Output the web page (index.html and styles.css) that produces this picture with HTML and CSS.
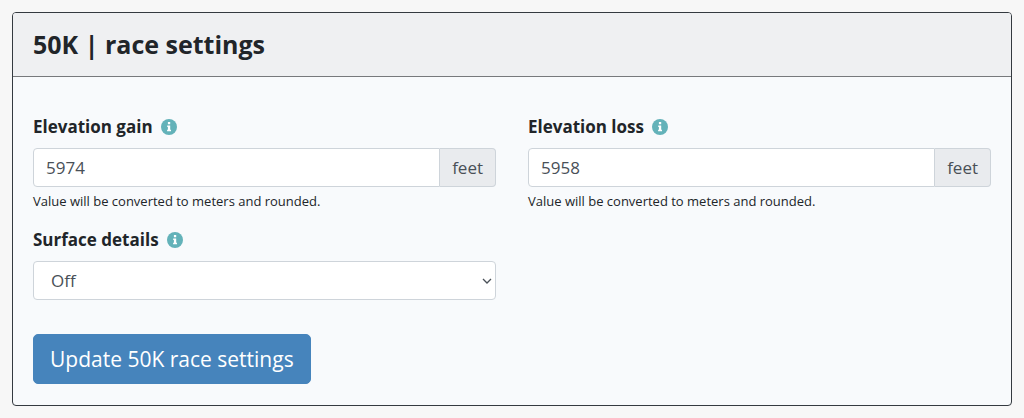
FILE: index.html
```html
<!DOCTYPE html>
<html lang="en">
<head>
    <meta charset="UTF-8">
    <meta name="viewport" content="width=device-width, initial-scale=1.0">
    <title>50K | race settings</title>
    <link rel="stylesheet" href="styles.css">
</head>
<body>
    <main class="card">
        <div class="card-header">
            <h1>50K | race settings</h1>
        </div>
        <form class="card-body">
            <div class="form-row">
                <div class="form-group">
                    <div class="label-row">
                        <label for="gain">Elevation gain</label>
                        <svg class="info-icon" viewBox="0 0 16 16" aria-hidden="true">
                            <circle cx="8" cy="8" r="8"/>
                            <path d="M6.9 3h2.3v2.2H6.9zM6.2 6.5h3v4.3H10v1.5H6.1v-1.5h.8V8h-.7z"/>
                        </svg>
                    </div>
                    <div class="input-group">
                        <input type="text" id="gain" value="5974" aria-describedby="gainHelp">
                        <span class="input-addon">feet</span>
                    </div>
                    <small id="gainHelp">Value will be converted to meters and rounded.</small>
                </div>
                <div class="form-group">
                    <div class="label-row">
                        <label for="loss">Elevation loss</label>
                        <svg class="info-icon" viewBox="0 0 16 16" aria-hidden="true">
                            <circle cx="8" cy="8" r="8"/>
                            <path d="M6.9 3h2.3v2.2H6.9zM6.2 6.5h3v4.3H10v1.5H6.1v-1.5h.8V8h-.7z"/>
                        </svg>
                    </div>
                    <div class="input-group">
                        <input type="text" id="loss" value="5958" aria-describedby="lossHelp">
                        <span class="input-addon">feet</span>
                    </div>
                    <small id="lossHelp">Value will be converted to meters and rounded.</small>
                </div>
                <div class="form-group">
                    <div class="label-row">
                        <label for="surface">Surface details</label>
                        <svg class="info-icon" viewBox="0 0 16 16" aria-hidden="true">
                            <circle cx="8" cy="8" r="8"/>
                            <path d="M6.9 3h2.3v2.2H6.9zM6.2 6.5h3v4.3H10v1.5H6.1v-1.5h.8V8h-.7z"/>
                        </svg>
                    </div>
                    <select id="surface">
                        <option selected>Off</option>
                        <option>On</option>
                    </select>
                </div>
            </div>
            <button type="submit">Update 50K race settings</button>
        </form>
    </main>
</body>
</html>
```
FILE: styles.css
```css
* {
    box-sizing: border-box;
}
body {
    margin: 0;
    padding: 12px;
    background-color: #f7f7f7;
    color: #212529;
    font-family: "Open Sans", "Noto Sans", sans-serif;
    font-size: 17px;
    line-height: 24px;
}
.card {
    background-color: #f8fafc;
    border: 1px solid #343a40;
    border-radius: 4px;
}
.card-header {
    padding: 16px 20px;
    background-color: #eff0f2;
    border-bottom: 1px solid #77797c;
    border-radius: 3px 3px 0 0;
}
h1 {
    margin: 0;
    font-size: 25px;
    font-weight: 700;
    line-height: 31px;
}
.card-body {
    padding: 38px 20px 21px;
}
.form-row {
    display: grid;
    grid-template-columns: 1fr 1fr;
    column-gap: 32px;
    row-gap: 17px;
    margin-bottom: 34px;
}
.label-row {
    display: flex;
    align-items: center;
    gap: 8px;
    margin-bottom: 9px;
}
label {
    font-weight: 700;
}
.info-icon {
    width: 16px;
    height: 16px;
    fill: #fff;
}
.info-icon circle {
    fill: #63b2b9;
}
.input-group {
    display: flex;
}
input,
select {
    width: 100%;
    height: 39px;
    min-width: 0;
    padding: 0 12px;
    border: 1px solid #ced4da;
    border-radius: 4px;
    background-color: #fff;
    color: #495057;
    font: inherit;
}
.input-group input {
    flex: 1;
    border-radius: 4px 0 0 4px;
}
.input-addon {
    padding: 7px 12px;
    border: 1px solid #ced4da;
    border-left: none;
    border-radius: 0 4px 4px 0;
    background-color: #e9ebee;
    color: #495057;
    line-height: 23px;
}
select {
    appearance: none;
    padding: 0 17px;
    background-image: url("data:image/svg+xml,%3Csvg xmlns='http://www.w3.org/2000/svg' viewBox='0 0 10 6'%3E%3Cpath d='M1 1l4 4 4-4' fill='none' stroke='%23495057' stroke-width='1.3'/%3E%3C/svg%3E");
    background-repeat: no-repeat;
    background-position: right 3px center;
    background-size: 10px 6px;
}
small {
    display: block;
    margin-top: 4px;
    font-size: 13px;
    line-height: 20px;
}
button {
    display: block;
    padding: 9px 16px;
    border: 1px solid #4684bc;
    border-radius: 5px;
    background-color: #4684bc;
    color: #fff;
    font: inherit;
    font-size: 21px;
    line-height: 30px;
    cursor: pointer;
}
```
